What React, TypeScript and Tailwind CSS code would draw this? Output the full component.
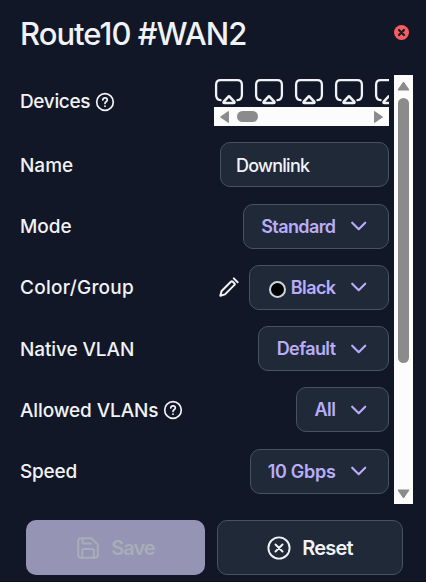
import React from 'react';

interface IconProps {
  className?: string;
}

const PortIcon: React.FC<IconProps> = ({ className }) => (
  <svg className={className} width="40" height="32" viewBox="0 0 40 32" fill="none" stroke="currentColor" strokeWidth="2.3" strokeLinecap="round" strokeLinejoin="round">
    <path d="M6.6 25.2 C3.6 24.8 2.1 23 2.1 20 V9.8 C2.1 6.6 3.6 5.2 6.6 5.2 H23.4 C26.4 5.2 27.9 6.6 27.9 9.8 V20 C27.9 23 26.4 24.8 23.4 25.2" />
    <path d="M14.2 21.8 Q15 20.8 15.8 21.8 L20.2 26.6 Q21 28 19.6 28 H10.4 Q9 28 9.8 26.6 Z" strokeWidth="2.6" />
  </svg>
);

const HelpIcon: React.FC = () => (
  <svg className="-mt-px" width="20" height="20" viewBox="0 0 20 20" fill="none" stroke="currentColor" strokeWidth="1.7" strokeLinecap="round" strokeLinejoin="round">
    <circle cx="10" cy="10" r="8.3" />
    <path d="M7.8 8 C7.9 6.6 8.8 5.9 10 5.9 C11.4 5.9 12.3 6.8 12.3 8 C12.3 9.8 10 9.7 10 11.4" />
    <path d="M10 14.1 V14.2" strokeWidth="1.8" />
  </svg>
);

const ChevronIcon: React.FC = () => (
  <svg width="16" height="10" viewBox="0 0 16 10" fill="none" stroke="currentColor" strokeWidth="2.1" strokeLinecap="round" strokeLinejoin="round">
    <path d="M1.2 1.7 L7.7 8.2 L14.2 1.7" />
  </svg>
);

const PencilIcon: React.FC = () => (
  <svg width="20" height="20" viewBox="0 0 20 20" fill="none" stroke="currentColor" strokeWidth="2" strokeLinecap="round" strokeLinejoin="round">
    <path d="M1.3 18.7 L2.6 14 L12.1 4.5 Q12.8 3.8 13.5 4.5 L15.5 6.5 Q16.2 7.2 15.5 7.9 L6 17.4 Z" />
    <path d="M14.8 1.4 L18.6 5.2" />
  </svg>
);

const SaveIcon: React.FC = () => (
  <svg width="22" height="22" viewBox="0 0 22 22" fill="none" stroke="currentColor" strokeWidth="2" strokeLinecap="round" strokeLinejoin="round">
    <path d="M4 1.2 H14.5 L20.8 7.5 V18 Q20.8 20.8 18 20.8 H4 Q1.2 20.8 1.2 18 V4 Q1.2 1.2 4 1.2 Z" />
    <path d="M5.2 20.5 V13.5 Q5.2 12 6.7 12 H15.3 Q16.8 12 16.8 13.5 V20.5" />
    <path d="M5.6 1.8 V5 Q5.6 6.6 7.2 6.6 H14" />
  </svg>
);

const ResetIcon: React.FC = () => (
  <svg width="24" height="24" viewBox="0 0 24 24" fill="none" stroke="currentColor" strokeWidth="1.9" strokeLinecap="round">
    <circle cx="12" cy="12" r="10.6" />
    <path d="M8.5 8.5 L15.5 15.5 M15.5 8.5 L8.5 15.5" strokeWidth="2" />
  </svg>
);

interface RowProps {
  label: string;
  tracking: string;
  help?: boolean;
  children: React.ReactNode;
}

const Row: React.FC<RowProps> = ({ label, tracking, help, children }) => (
  <div className="flex h-[45px] shrink-0 items-center justify-between">
    <div className="flex items-center gap-[5px] pt-0.5">
      <span className={`text-[19px] leading-6 font-medium whitespace-nowrap ${tracking}`}>{label}</span>
      {help && <HelpIcon />}
    </div>
    {children}
  </div>
);

interface SelectProps {
  value: string;
  width: string;
  tracking: string;
  dot?: boolean;
}

const Select: React.FC<SelectProps> = ({ value, width, tracking, dot }) => (
  <button className={`flex h-[45px] items-center justify-end rounded-[10px] border border-[#465363] bg-[#1f2937] pr-[21px] text-[#b9adfb] ${width}`}>
    {dot && <span className="mt-1 mr-[5px] size-[17px] rounded-full border-2 border-gray-300 bg-black" />}
    <span className={`mt-px mr-[15.5px] text-[18px] leading-6 font-semibold whitespace-nowrap ${tracking}`}>{value}</span>
    <ChevronIcon />
  </button>
);

const App: React.FC = () => {
  return (
    <div className="h-[582px] w-[426px] overflow-hidden border-b border-[#0b101c] bg-[#111726] font-['Inter',sans-serif] text-[#f1f2f5]">
      <header className="flex h-[75px] items-start justify-between pt-[13px] pr-[17px] pl-5">
        <h1 className="mt-px text-[31px] leading-10 font-medium tracking-[-0.98px] whitespace-nowrap">Route10 #WAN2</h1>
        <button className="mt-3">
          <svg width="15" height="15" viewBox="0 0 15 15">
            <circle cx="7.5" cy="7.5" r="7.5" fill="#fa5c5f" />
            <path d="M5 5 L10 10 M10 5 L5 10" stroke="#171b2a" strokeWidth="2.2" strokeLinecap="round" />
          </svg>
        </button>
      </header>

      <div className="flex h-[429px] pl-5">
        <div className="flex w-[369px] flex-col">
          <div className="flex h-[51px] items-start justify-between">
            <div className="flex items-center gap-[5px] pt-[15px]">
              <span className="text-[19px] leading-6 font-medium tracking-[-0.35px]">Devices</span>
              <HelpIcon />
            </div>
            <div className="w-[175px] overflow-hidden">
              <div className="flex h-8 w-[200px]">
                {[0, 1, 2, 3, 4].map((port) => <PortIcon key={port} className="shrink-0" />)}
              </div>
              <svg width="175" height="19" viewBox="0 0 175 19">
                <rect width="175" height="19" fill="#fcfcfc" />
                <g fill="#8b8b8b" stroke="#8b8b8b" strokeLinejoin="round">
                  <path d="M6.5 10 L14.5 4.5 V15.5 Z" />
                  <path d="M168.5 10 L160.5 4.5 V15.5 Z" />
                </g>
                <rect x="23" y="4" width="21" height="11" rx="5.5" fill="#8b8b8b" />
              </svg>
            </div>
          </div>

          <div className="flex flex-col gap-[16.22px] pt-[16.45px]">
            <Row label="Name" tracking="tracking-[0px]">
              <input
                className="h-[45px] w-[169px] rounded-[10px] border border-[#465363] bg-[#1f2937] px-[15px] pt-0.5 text-[18px] font-medium tracking-[-0.75px] outline-none"
                defaultValue="Downlink"
              />
            </Row>
            <Row label="Mode" tracking="tracking-[0px]">
              <Select value="Standard" width="w-[146px]" tracking="tracking-[-0.6px]" />
            </Row>
            <Row label="Color/Group" tracking="tracking-[0.25px]">
              <div className="flex items-center gap-[10px]">
                <PencilIcon />
                <Select value="Black" width="w-[140px]" tracking="tracking-[-0.6px]" dot />
              </div>
            </Row>
            <Row label="Native VLAN" tracking="tracking-[-0.1px]">
              <Select value="Default" width="w-[131px]" tracking="tracking-[-0.6px]" />
            </Row>
            <Row label="Allowed VLANs" tracking="tracking-[-0.12px]" help>
              <Select value="All" width="w-[93px]" tracking="tracking-[-0.5px]" />
            </Row>
            <Row label="Speed" tracking="tracking-[-0.2px]">
              <Select value="10 Gbps" width="w-[139px]" tracking="tracking-[-0.3px]" />
            </Row>
          </div>
        </div>

        <svg className="ml-[5px]" width="19" height="429" viewBox="0 0 19 429">
          <rect width="19" height="429" fill="#fcfcfc" />
          <g fill="#8b8b8b" stroke="#8b8b8b" strokeLinejoin="round">
            <path d="M9.5 7 L15 15 H4 Z" />
            <path d="M9.5 423 L15 415 H4 Z" />
          </g>
          <rect x="4" y="23" width="11" height="265" rx="5.5" fill="#8b8b8b" />
        </svg>
      </div>

      <footer className="flex gap-3 pt-4 pl-[26px]">
        <button className="flex h-[55px] w-[179px] items-center justify-center gap-3 rounded-[10px] bg-[#9594b5] pl-px text-[#a9adb7]">
          <SaveIcon />
          <span className="text-[20px] leading-6 font-semibold tracking-[-1px]">Save</span>
        </button>
        <button className="flex h-[55px] w-[186px] items-center justify-center gap-[11px] rounded-[10px] border border-[#465363] bg-[#1f2937]">
          <ResetIcon />
          <span className="mt-px text-[20px] leading-6 font-semibold tracking-[-0.8px]">Reset</span>
        </button>
      </footer>
    </div>
  );
};

export default App;
